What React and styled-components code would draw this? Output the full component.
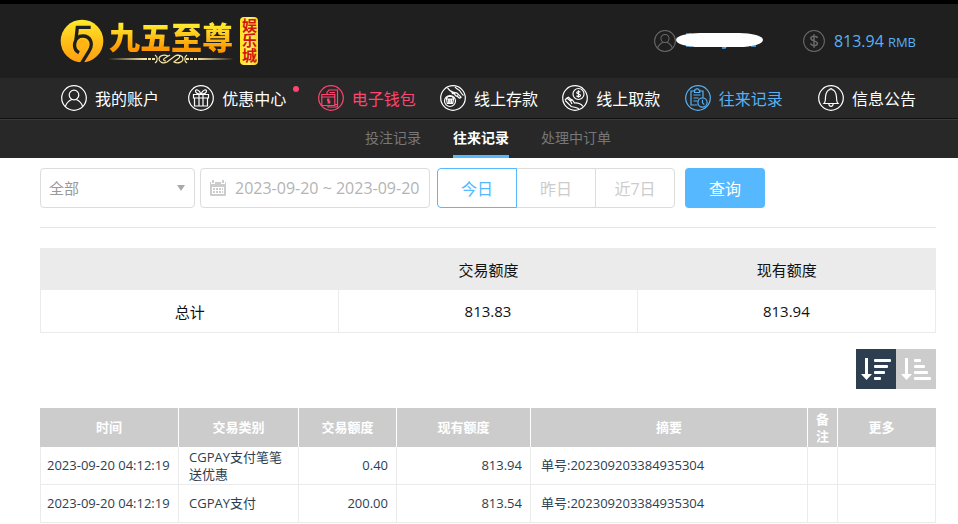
import React, { useState } from 'react';
import styled, { createGlobalStyle } from 'styled-components';

const GlobalStyle = createGlobalStyle`
  * {
    box-sizing: border-box;
  }

  body {
    margin: 0;
    background: #fff;
    font-family: 'Open Sans', 'Noto Sans CJK SC', sans-serif;
    font-size: 13px;
    color: #2d3e50;
  }

  button, input, select {
    font-family: inherit;
  }
`;

const Header = styled.header`
  border-top: 4px solid #000;
  background: #1f1f1f;
`;

const Wrap = styled.div`
  margin: 0 22px 0 40px;
`;

const TopBar = styled(Wrap)`
  display: flex;
  align-items: center;
  justify-content: space-between;
  height: 74px;
  padding: 0 20px;
`;

const Logo = styled.a`
  display: flex;
  align-items: center;
  text-decoration: none;
`;

const LogoWords = styled.span`
  display: flex;
  flex-direction: column;
  align-items: center;
  margin: 0 6px 0 4px;
`;

const LogoName = styled.span`
  font-family: 'Noto Sans CJK SC', sans-serif;
  font-size: 31px;
  font-weight: 900;
  line-height: 36px;
  color: transparent;
  background: linear-gradient(#ffe92e 20%, #ff9800 85%);
  background-clip: text;
`;

const LogoTag = styled.span`
  width: 18px;
  padding: 1px 0 2px;
  border-radius: 4px;
  background: linear-gradient(90deg, #ffe21f, #fff36b, #ffd21a);
  color: #d3160c;
  font-family: 'Noto Sans CJK SC', sans-serif;
  font-size: 15px;
  font-weight: 700;
  line-height: 18px;
  writing-mode: vertical-rl;
`;

const Account = styled.div`
  display: flex;
  align-items: center;
  color: #56b1f7;
  font-size: 16px;
`;

const Masked = styled.span`
  display: flex;
  margin-right: 40px;
`;

const Balance = styled.span`
  margin-left: 9px;

  small {
    margin-left: 4px;
    font-size: 13px;
  }
`;

const MainNav = styled.nav`
  background: #282828;
  border-bottom: 1px solid #111;
`;

const MainList = styled(Wrap)`
  display: grid;
  grid-template-columns: 127fr 129fr 122fr 122fr 122fr 133fr auto;
  padding: 0 20px 0 21px;
`;

const tones = { plain: '#fff', hot: '#ff4470', active: '#56b1f7' };

const MainLink = styled.a`
  display: flex;
  align-items: center;
  gap: 8px;
  height: 40px;
  color: ${({ $tone }) => tones[$tone]};
  font-size: 16px;
  white-space: nowrap;
  text-decoration: none;
`;

const NavText = styled.span`
  position: relative;
`;

const Dot = styled.i`
  position: absolute;
  top: 0;
  right: -13px;
  width: 6px;
  height: 6px;
  border-radius: 50%;
  background: #ff4470;
`;

const SubNav = styled.nav`
  background: #282828;
  border-top: 1px solid #3a3a3a;
`;

const SubList = styled(Wrap)`
  display: flex;
  justify-content: center;
  gap: 32px;
`;

const SubLink = styled.a`
  height: 38px;
  border-bottom: 3px solid ${({ $active }) => ($active ? '#56b8ff' : 'transparent')};
  color: ${({ $active }) => ($active ? '#fff' : '#777')};
  font-size: 14px;
  font-weight: ${({ $active }) => ($active ? 700 : 400)};
  line-height: 35px;
  text-decoration: none;
`;

const Filters = styled.form`
  display: flex;
  padding: 10px 0 19px;
  border-bottom: 1px solid #e6e6e6;
`;

const Field = styled.label`
  display: flex;
  align-items: center;
  width: ${({ $width }) => $width}px;
  height: 40px;
  margin-right: ${({ $after }) => $after}px;
  padding: 0 8px;
  border: 1px solid #dcdcdc;
  border-radius: 4px;
  color: #aaa;
`;

const Select = styled.select`
  flex: 1;
  min-width: 0;
  padding: 0;
  border: 0;
  outline: 0;
  appearance: none;
  background: none;
  color: #999;
  font-size: 15px;
`;

const DateInput = styled.input`
  flex: 1;
  min-width: 0;
  margin-left: 8px;
  padding: 0;
  border: 0;
  outline: 0;
  background: none;
  color: #b4b4b4;
  font-size: 16px;
`;

const DayGroup = styled.div`
  display: flex;
  margin-right: 10px;
`;

const DayButton = styled.button`
  width: 80px;
  height: 40px;
  padding: 0;
  border: 1px solid ${({ $active }) => ($active ? '#56b8ff' : '#dcdcdc')};
  background: #fff;
  color: ${({ $active }) => ($active ? '#56b8ff' : '#ccc')};
  font-size: 16px;
  z-index: ${({ $active }) => ($active ? 1 : 0)};

  & + & {
    margin-left: -1px;
  }

  &:first-child {
    border-radius: 4px 0 0 4px;
  }

  &:last-child {
    border-radius: 0 4px 4px 0;
  }
`;

const SearchButton = styled.button`
  width: 80px;
  height: 40px;
  border: 0;
  border-radius: 4px;
  background: #56b8ff;
  color: #fff;
  font-size: 16px;
`;

const Table = styled.table`
  width: 100%;
  border-collapse: separate;
  border-spacing: 0;
  table-layout: fixed;
`;

const SummaryTable = styled(Table)`
  margin-top: 20px;
  border-left: 1px solid #ebebeb;
  color: #111;
  font-size: 15px;
  text-align: center;

  th {
    height: 42px;
    padding: 0;
    background: #ebebeb;
    font-weight: 400;
  }

  td {
    height: 43px;
    padding: 0;
    border-right: 1px solid #ebebeb;
    border-bottom: 1px solid #ebebeb;
  }
`;

const SortBar = styled.div`
  display: flex;
  justify-content: flex-end;
  margin: 16px 0 19px;
`;

const SortButton = styled.button`
  display: flex;
  width: 40px;
  height: 40px;
  padding: 0;
  border: 0;
  background: ${({ $active }) => ($active ? '#2d3e50' : '#ccc')};
`;

const RecordTable = styled(Table)`
  th {
    height: 39px;
    padding: 0 7px;
    border-right: 1px solid #fff;
    background: #ccc;
    color: #fff;
    font-size: 13px;
    line-height: 17px;
  }

  th:last-child {
    padding-right: 18px;
    border-right: 0;
  }

  td {
    height: 38px;
    padding: 0 3px 0 6px;
    border-right: 1px solid #ebebeb;
    border-bottom: 1px solid #ebebeb;
    line-height: 17px;
    white-space: nowrap;
  }

  td:first-child {
    border-left: 1px solid #ebebeb;
  }
`;

const TextCell = styled.td`
  && {
    padding: 0 10px;
    white-space: normal;
  }
`;

const AmountCell = styled.td`
  && {
    padding: 0 8px;
    text-align: right;
  }
`;

const icons = {
  user: (
    <>
      <circle cx="13" cy="10" r="4.8" />
      <path d="M4.2 22c1-4 3.500-6.200 6.600-7.500M21.800 22c-1-4-3.500-6.200-6.600-7.500" />
    </>
  ),
  gift: (
    <>
      <path d="M5.500 9.500h15v3.500h-15zM6.500 13v8h13v-8M11 9.500V21M15 9.500V21" />
      <path d="M13 9C10 9 7.500 8 7.500 6S11 4.500 13 9c2-4.500 5.500-5 5.500-3S16 9 13 9" />
    </>
  ),
  wallet: (
    <>
      <path d="M3.800 9.500h13v11h-13zM3.800 12h13M9 9V7.500L11 5h8.500v17H10v-1.500" />
      <path d="M11.500 7.500H17M19.500 19.500H17M11.500 14.200H9.700v1.800h2v1.800H9.500M10.600 13.500v5" />
    </>
  ),
  deposit: (
    <>
      <circle cx="10" cy="16" r="5.500" />
      <path d="M6.500 14h7l-.8 4.500H7.300zM8.700 14v4M10 14v4M11.500 14v4M6 13.500l2-2h4l2 2" />
      <path d="M7.500 2.800c1.500 2.500 3.500 4 6 4.500M15 2c1 1.500 3 2 4.500 3.500 1.500 2 2.500 4 4 5M13.500 7.300l3.500.8 4.500 4.500M12 6.800c-.5 1.500 1 2.200 2.300 1.800l1.200 2c1 1 2 .5 1.700-.7M17 11l2.200 2c1 .6 1.700-.3 1-1.200" />
    </>
  ),
  withdraw: (
    <>
      <circle cx="16.500" cy="9" r="5.500" />
      <path d="M18.300 7.300c-.5-1-3.500-1.200-3.600.4 0 1.700 3.800.9 3.800 2.700 0 1.600-3.200 1.600-4 .2M16.500 5.300v7.400" />
      <path d="M3 15l2-2 4 3.500M5 13l1.500-.8L10 15.500M3.200 15.500l6 6 4.500 1c2 .4 3 1.200 3.500 2M10 19l-1.500-3c.6-1.500 2-1.300 2.700 0l1.300 2c3.500-.3 6.500 1 8.500 3.500" />
    </>
  ),
  records: (
    <>
      <path d="M12.500 20H6V6h3.500M14.500 6H18v6.500M9.500 5h1l.7-1.200h1.800l.7 1.200h1v2.500h-5.200zM8.500 10h7M8.500 13h5M8.500 16h4" />
      <circle cx="17.500" cy="17.500" r="4.600" />
      <path d="M17.500 14.800v3l1.800 1.800" />
    </>
  ),
  bell: (
    <path d="M6 18.500c1.500-1.500 1.500-3 1.500-6.500 0-4 2.200-7 4.300-7.300 0-1.500 2.400-1.500 2.400 0 2.100.3 4.300 3.300 4.300 7.300 0 3.500 0 5 1.500 6.500zM10.800 18.800c.2 3.400 4.200 3.400 4.400 0" />
  ),
  dollar: (
    <path d="M17 9.500C16.300 7 9.500 6.500 9.300 9.800c0 3.700 7.700 2.400 7.700 6.200 0 3.300-7 3.300-8-.2M13 5v16" strokeWidth="1.800" />
  ),
};

function RoundIcon({ name, size = 26 }) {
  return (
    <svg width={size} height={size} viewBox="0 0 26 26" fill="none" stroke="currentColor" strokeWidth="1.200" aria-hidden="true">
      <circle cx="13" cy="13" r="12.300" />
      {icons[name]}
    </svg>
  );
}

const Grey = styled.span`
  display: flex;
  color: #6a6a6a;
`;

function Emblem() {
  return (
    <svg width="44" height="44" viewBox="14 19 132 132" aria-hidden="true">
      <defs>
        <linearGradient id="gold" x1="0" y1="0" x2="0" y2="1">
          <stop offset="0" stopColor="#ffec2c" />
          <stop offset="0.5" stopColor="#ffc018" />
          <stop offset="1" stopColor="#ffa010" />
        </linearGradient>
      </defs>
      <circle cx="80" cy="85" r="64" fill="url(#gold)" />
      <circle cx="81" cy="97" r="17" fill="#ffb414" />
      <g fill="none" stroke="#1f1f1f" strokeWidth="10">
        <path d="M106 44H66L62 80" />
        <path d="M71 120C49 108 56 70 82 70c25 0 32 24 20 44L78 153" />
      </g>
    </svg>
  );
}

function Flourish() {
  return (
    <svg width="126" height="10" viewBox="0 0 126 10" fill="none" stroke="#f6e3a0" aria-hidden="true">
      <path d="M0 5l36-1v2zM126 5l-36-1v2z" fill="#f6e3a0" stroke="none" />
      <path d="M36 5h12M78 5h12" strokeWidth="2" strokeDasharray="3 1" />
      <path d="M47 1c3 2 3 6 0 8M79 1c-3 2-3 6 0 8M60 2c-5-2-9 0-9 3s4 5 8 3l8-6c3-2 6 0 4 2l-5 4c4 2 9 0 9-3s-4-5-8-3l-8 6M58 7c-3 0-3-2-1-3l5-3" strokeWidth="1.200" />
    </svg>
  );
}

function SortIcon({ bars }) {
  return (
    <svg width="40" height="40" viewBox="0 0 40 40" fill="#fff" aria-hidden="true">
      <path d="M9 9h3v16h4l-5.500 6L5 25h4z" />
      {bars.map((width, i) => (
        <rect key={i} x="18" y={10 + i * 6} width={width} height="3" rx="1" />
      ))}
    </svg>
  );
}

const navItems = [
  { icon: 'user', label: '我的账户', tone: 'plain' },
  { icon: 'gift', label: '优惠中心', tone: 'plain', dot: true },
  { icon: 'wallet', label: '电子钱包', tone: 'hot' },
  { icon: 'deposit', label: '线上存款', tone: 'plain' },
  { icon: 'withdraw', label: '线上取款', tone: 'plain' },
  { icon: 'records', label: '往来记录', tone: 'active' },
  { icon: 'bell', label: '信息公告', tone: 'plain' },
];

const subItems = ['投注记录', '往来记录', '处理中订单'];
const days = ['今日', '昨日', '近7日'];
const columns = [
  { label: '时间', width: 139 },
  { label: '交易类别', width: 120 },
  { label: '交易额度', width: 98 },
  { label: '现有额度', width: 134 },
  { label: '摘要' },
  { label: '备注', width: 30 },
  { label: '更多', width: 98 },
];

const records = [
  { time: '2023-09-20 04:12:19', type: 'CGPAY支付笔笔送优惠', amount: '0.40', balance: '813.94', note: '单号:202309203384935304' },
  { time: '2023-09-20 04:12:19', type: 'CGPAY支付', amount: '200.00', balance: '813.54', note: '单号:202309203384935304' },
];

function App() {
  const [sub, setSub] = useState('往来记录');
  const [day, setDay] = useState('今日');
  const [order, setOrder] = useState('desc');

  return (
    <>
      <GlobalStyle />
      <Header>
        <TopBar>
          <Logo href="#">
            <Emblem />
            <LogoWords>
              <LogoName>九五至尊</LogoName>
              <Flourish />
            </LogoWords>
            <LogoTag>娱乐城</LogoTag>
          </Logo>
          <Account>
            <Grey><RoundIcon name="user" size={22} /></Grey>
            <Masked>
              <svg width="87" height="20" viewBox="0 0 87 20" aria-hidden="true">
                <path d="M46 17h3l2-3M10 3h5M10 15h5M75 15h5" fill="none" stroke="#56b1f7" strokeWidth="1.500" />
                <rect x="0" y="2" width="87" height="14" rx="24" ry="7" fill="#fff" />
              </svg>
            </Masked>
            <Grey><RoundIcon name="dollar" size={22} /></Grey>
            <Balance>813.94<small>RMB</small></Balance>
          </Account>
        </TopBar>
        <MainNav>
          <MainList>
            {navItems.map((item) => (
              <MainLink key={item.label} href="#" $tone={item.tone}>
                <RoundIcon name={item.icon} />
                <NavText>
                  {item.label}
                  {item.dot && <Dot />}
                </NavText>
              </MainLink>
            ))}
          </MainList>
        </MainNav>
        <SubNav>
          <SubList>
            {subItems.map((label) => (
              <SubLink key={label} href="#" $active={sub === label} onClick={() => setSub(label)}>
                {label}
              </SubLink>
            ))}
          </SubList>
        </SubNav>
      </Header>

      <Wrap as="main">
        <Filters onSubmit={(e) => e.preventDefault()}>
          <Field $width={155} $after={5}>
            <Select aria-label="交易类别">
              <option>全部</option>
            </Select>
            <svg width="10" height="8" viewBox="0 0 10 8" fill="#aaa" aria-hidden="true">
              <path d="M1 1h8L5 7z" />
            </svg>
          </Field>
          <Field $width={230} $after={7}>
            <svg width="18" height="18" viewBox="0 0 18 18" fill="#ccc" aria-hidden="true">
              <path d="M1 3h1v2h4V3h6v2h4V3h1v13a1 1 0 0 1-1 1H2a1 1 0 0 1-1-1zM3 8v7h12V8z" fillRule="evenodd" />
              <path d="M3 1h2v3H3zM13 1h2v3h-2zM4 9h2v2H4zM7 9h2v2H7zM10 9h2v2h-2zM13 9h1v2h-1zM4 12h2v2H4zM7 12h2v2H7zM10 12h2v2h-2zM13 12h1v2h-1z" />
            </svg>
            <DateInput aria-label="时间" defaultValue="2023-09-20 ~ 2023-09-20" />
          </Field>
          <DayGroup>
            {days.map((label) => (
              <DayButton key={label} type="button" $active={day === label} onClick={() => setDay(label)}>
                {label}
              </DayButton>
            ))}
          </DayGroup>
          <SearchButton type="submit">查询</SearchButton>
        </Filters>

        <SummaryTable>
          <thead>
            <tr>
              <th />
              <th>交易额度</th>
              <th>现有额度</th>
            </tr>
          </thead>
          <tbody>
            <tr>
              <td>总计</td>
              <td>813.83</td>
              <td>813.94</td>
            </tr>
          </tbody>
        </SummaryTable>

        <SortBar>
          <SortButton type="button" aria-label="降序" $active={order === 'desc'} onClick={() => setOrder('desc')}>
            <SortIcon bars={[17, 14, 11, 7]} />
          </SortButton>
          <SortButton type="button" aria-label="升序" $active={order === 'asc'} onClick={() => setOrder('asc')}>
            <SortIcon bars={[7, 11, 14, 17]} />
          </SortButton>
        </SortBar>

        <RecordTable>
          <colgroup>
            {columns.map((col) => (
              <col key={col.label} width={col.width} />
            ))}
          </colgroup>
          <thead>
            <tr>
              {columns.map((col) => (
                <th key={col.label}>{col.label}</th>
              ))}
            </tr>
          </thead>
          <tbody>
            {records.map((row, i) => (
              <tr key={i}>
                <td>{row.time}</td>
                <TextCell>{row.type}</TextCell>
                <AmountCell>{row.amount}</AmountCell>
                <AmountCell>{row.balance}</AmountCell>
                <TextCell>{row.note}</TextCell>
                <td />
                <td />
              </tr>
            ))}
          </tbody>
        </RecordTable>
      </Wrap>
    </>
  );
}

export default App;
